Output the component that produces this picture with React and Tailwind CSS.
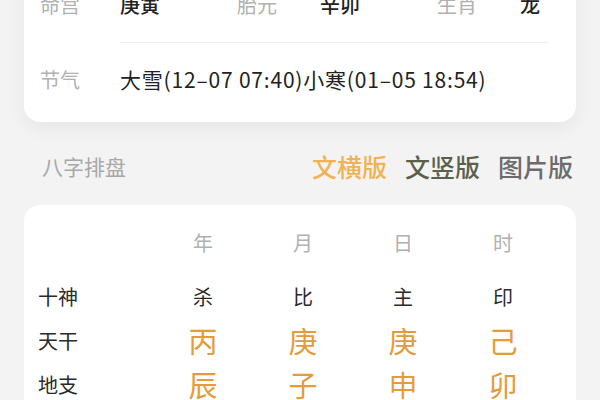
import React from 'react';

const font = { fontFamily: '"Noto Sans CJK SC", "Noto Sans", sans-serif' };

const pillars = [
  { head: '年', god: '杀', gan: '丙', zhi: '辰' },
  { head: '月', god: '比', gan: '庚', zhi: '子' },
  { head: '日', god: '主', gan: '庚', zhi: '申' },
  { head: '时', god: '印', gan: '己', zhi: '卯' },
];

const App = () => {
  return (
    <div className="w-[600px] h-[400px] overflow-hidden bg-[#f3f3f3]" style={font}>
      <div className="mx-6 -mt-[32px] bg-white rounded-2xl shadow-[0_6px_18px_rgba(0,0,0,0.06)] pl-4 pr-[28px] pb-[5px]">
        <div className="h-[74px] grid grid-cols-[80px_117px_83px_117px_83px_1fr] items-center text-[20px]">
          <span className="text-[#b0b0b0]">命宫</span>
          <span className="text-[#222] font-medium">庚寅</span>
          <span className="text-[#b0b0b0]">胎元</span>
          <span className="text-[#222] font-medium">辛卯</span>
          <span className="text-[#b0b0b0]">生肖</span>
          <span className="text-[#222] font-medium">龙</span>
        </div>
        <div className="ml-[80px] h-px bg-[#eeeeee]"></div>
        <div className="h-[74px] flex items-center">
          <span className="w-[80px] text-[20px] text-[#b0b0b0]">节气</span>
          <span className="text-[21px] tracking-[0.8px] text-[#222]">大雪(12–07 07:40)小寒(01–05 18:54)</span>
        </div>
      </div>

      <div className="mx-6 mt-[29px] mb-[22px] h-[32px] flex items-center justify-between pl-[18px] pr-[3px]">
        <span className="text-[21px] text-[#a8a8a8]">八字排盘</span>
        <div className="flex gap-[18px] text-[25px] font-medium">
          <span className="text-[#f0b252]">文横版</span>
          <span className="text-[#5b604c]">文竖版</span>
          <span className="text-[#6b6b6b]">图片版</span>
        </div>
      </div>

      <div className="mx-6 bg-white rounded-2xl pt-[16px] pl-[14px] pb-4">
        <div className="grid grid-cols-[115px_100px_100px_100px_100px] h-[44px] items-center text-[20px] text-[#b0b0b0]">
          <span></span>
          {pillars.map(p => (
            <span key={p.head} className="text-center">{p.head}</span>
          ))}
        </div>
        <div className="mt-[10px] flex flex-col">
          <div className="grid grid-cols-[115px_100px_100px_100px_100px] h-[44px] items-center text-[20px] text-[#2a2a2a]">
            <span>十神</span>
            {pillars.map((p, i) => (
              <span key={i} className="text-center">{p.god}</span>
            ))}
          </div>
          <div className="grid grid-cols-[115px_100px_100px_100px_100px] h-[44px] items-center">
            <span className="text-[20px] text-[#2a2a2a]">天干</span>
            {pillars.map((p, i) => (
              <span key={i} className="text-center text-[29px] text-[#e39b3c]">{p.gan}</span>
            ))}
          </div>
          <div className="grid grid-cols-[115px_100px_100px_100px_100px] h-[44px] items-center">
            <span className="text-[20px] text-[#2a2a2a]">地支</span>
            {pillars.map((p, i) => (
              <span key={i} className="text-center text-[29px] text-[#e39b3c]">{p.zhi}</span>
            ))}
          </div>
        </div>
      </div>
    </div>
  );
};

export default App;
